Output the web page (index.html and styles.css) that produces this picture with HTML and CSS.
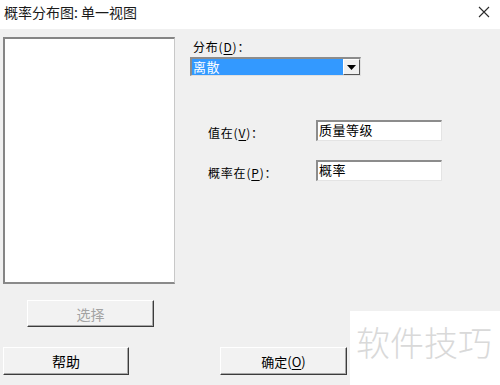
FILE: index.html
```html
<!DOCTYPE html>
<html lang="zh-CN">
<head>
  <meta charset="UTF-8">
  <title>概率分布图: 单一视图</title>
  <link rel="stylesheet" href="styles.css">
</head>
<body>
  <div class="window">
    <header class="titlebar">
      <span class="title">概率分布图: 单一视图</span>
      <svg class="close" width="12" height="12" viewBox="0 0 12 12">
        <path d="M1 1 L11 11 M11 1 L1 11" stroke="#2b2b2b" stroke-width="1.1" fill="none"/>
      </svg>
    </header>

    <main class="dialog">
      <div class="left-col">
        <div class="listbox"></div>
        <button class="btn btn-select" disabled>选择</button>
        <button class="btn btn-help">帮助</button>
      </div>

      <div class="right-col">
        <label class="dist-label">分布(<u>D</u>)：</label>
        <div class="combo">
          <span class="combo-value">离散</span>
          <span class="combo-arrow">
            <svg width="9" height="5" viewBox="0 0 9 5"><path d="M0 0 H9 L4.5 5 Z" fill="#000"/></svg>
          </span>
        </div>

        <div class="field-row first">
          <label class="field-label">值在(<u>V</u>)：</label>
          <div class="textbox">质量等级</div>
        </div>
        <div class="field-row">
          <label class="field-label">概率在(<u>P</u>)：</label>
          <div class="textbox">概率</div>
        </div>

        <button class="btn btn-ok">确定(<u>O</u>)</button>
      </div>
    </main>

    <div class="watermark">软件技巧</div>
  </div>
</body>
</html>
```

FILE: styles.css
```css
body {
  margin: 0;
  padding: 0;
  background-color: #f0f0f0;
  font-family: "Noto Sans CJK SC", "Noto Sans", sans-serif;
  color: #000;
}

.window {
  position: relative;
  width: 500px;
  height: 385px;
  overflow: hidden;
}

/* Title bar */
.titlebar {
  height: 29px;
  background-color: #ffffff;
  display: flex;
  align-items: center;
  justify-content: space-between;
  padding: 0 10px 0 4px;
  box-sizing: border-box;
}

.title {
  font-size: 14px;
  color: #1a1a1a;
  margin-top: -5px;
}

.close {
  margin-top: -5px;
}

/* Dialog body */
.dialog {
  display: flex;
  height: 356px;
  box-sizing: border-box;
  padding: 8px 0 10px 3px;
}

.left-col {
  width: 172px;
  display: flex;
  flex-direction: column;
}

.listbox {
  height: 247px;
  background-color: #ffffff;
  box-sizing: border-box;
  border-top: 2px solid #858585;
  border-left: 2px solid #858585;
  border-right: 1px solid #c8c8c8;
  border-bottom: 2px solid #8a8a8a;
}

.btn {
  font-family: "Noto Sans CJK SC", sans-serif;
  background-color: #f2f2f2;
  box-sizing: border-box;
  border: 1px solid;
  border-color: #ffffff #3c3c3c #3c3c3c #ffffff;
  box-shadow: inset -1px -1px 0 #a8a8a8;
  padding: 0;
  color: #000;
  font-size: 14px;
}

.btn-select {
  width: 127px;
  height: 27px;
  margin: 16px 0 0 24px;
  color: #a3a3a3;
}

.btn-help {
  width: 126px;
  height: 28px;
  margin-top: auto;
}

.right-col {
  margin-left: 15px;
  display: flex;
  flex-direction: column;
}

.dist-label {
  font-size: 12px;
  margin: 3px 0 0 3px;
  line-height: 14px;
  height: 17px;
  letter-spacing: 0.8px;
}

u {
  text-decoration-thickness: 1px;
  text-underline-offset: 2px;
}

.combo {
  width: 171px;
  height: 19px;
  box-sizing: border-box;
  border-top: 2px solid #8c8c8c;
  border-left: 2px solid #8c8c8c;
  border-right: 1px solid #e0e0e0;
  border-bottom: 1px solid #e0e0e0;
  background-color: #3399ff;
  display: flex;
  align-items: stretch;
}

.combo-value {
  flex: 1;
  color: #ffffff;
  font-size: 13px;
  line-height: 16px;
  padding-left: 1px;
  letter-spacing: 0.5px;
}

.combo-arrow {
  width: 17px;
  background-color: #f0f0f0;
  box-sizing: border-box;
  border: 1px solid;
  border-color: #ffffff #555555 #555555 #ffffff;
  display: flex;
  align-items: center;
  justify-content: center;
}

.field-row {
  display: flex;
  align-items: center;
  margin-top: 19px;
}

.field-row.first {
  margin-top: 44px;
}

.field-label {
  width: 126px;
  padding-left: 18px;
  box-sizing: border-box;
  font-size: 12px;
  margin-top: 3px;
  letter-spacing: 0.8px;
}

.textbox {
  width: 126px;
  height: 21px;
  box-sizing: border-box;
  background-color: #ffffff;
  border-top: 2px solid #8c8c8c;
  border-left: 2px solid #8c8c8c;
  border-right: 1px solid #e4e4e4;
  border-bottom: 1px solid #e4e4e4;
  font-size: 13px;
  line-height: 16px;
  padding-left: 1px;
  letter-spacing: 0.5px;
}

.btn-ok {
  width: 127px;
  height: 28px;
  margin: auto 0 0 30px;
  font-size: 13px;
}

/* Watermark overlay */
.watermark {
  position: absolute;
  left: 350px;
  top: 311px;
  width: 150px;
  height: 74px;
  background-color: #ffffff;
  color: #d9d9d9;
  font-size: 34px;
  line-height: 34px;
  padding: 14px 0 0 6px;
  box-sizing: border-box;
  font-weight: 300;
}
```
